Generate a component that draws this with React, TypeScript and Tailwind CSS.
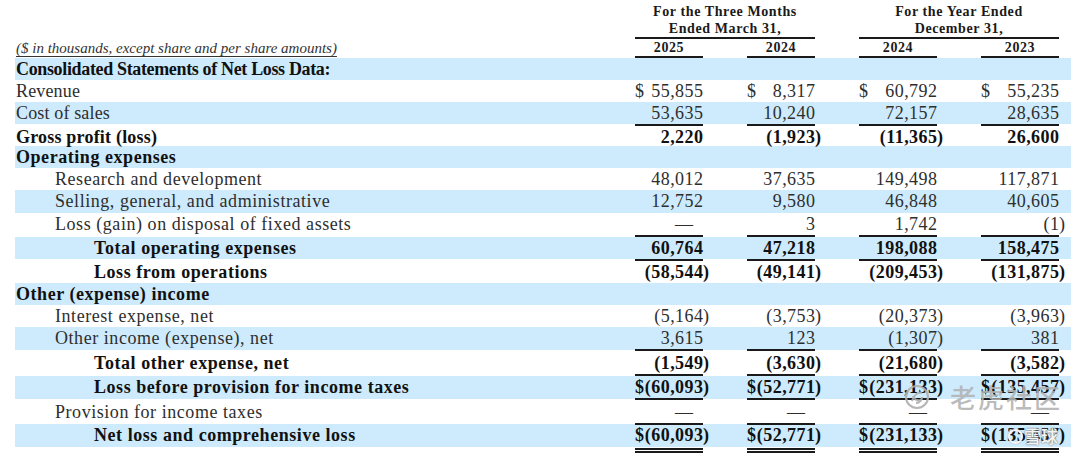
import clsx from "clsx";

type Row = {
  label: string;
  indent?: 0 | 1 | 2;
  bold?: boolean;
  band?: boolean;
  h: string;
  pt?: boolean;
  ul?: boolean;
  dollar?: boolean;
  track?: string;
  vals?: string[];
};

const rows: Row[] = [
  { label: "Consolidated Statements of Net Loss Data:", bold: true, band: true, h: "h-[22px]", track: "tracking-[-0.35px]" },
  { label: "Revenue", h: "h-[22px]", dollar: true, track: "tracking-[0.15px]", vals: ["55,855", "8,317", "60,792", "55,235"] },
  { label: "Cost of sales", band: true, h: "h-[22px]", ul: true, track: "tracking-[0.15px]", vals: ["53,635", "10,240", "72,157", "28,635"] },
  { label: "Gross profit (loss)", bold: true, h: "h-[22px]", pt: true, track: "tracking-[0.2px]", vals: ["2,220", "(1,923)", "(11,365)", "26,600"] },
  { label: "Operating expenses", bold: true, band: true, h: "h-[22px]" },
  { label: "Research and development", indent: 1, h: "h-[22px]", vals: ["48,012", "37,635", "149,498", "117,871"] },
  { label: "Selling, general, and administrative", indent: 1, band: true, h: "h-[23px]", vals: ["12,752", "9,580", "46,848", "40,605"] },
  { label: "Loss (gain) on disposal of fixed assets", indent: 1, h: "h-[24px]", ul: true, vals: ["—", "3", "1,742", "(1)"] },
  { label: "Total operating expenses", indent: 2, bold: true, band: true, h: "h-[22px]", ul: true, vals: ["60,764", "47,218", "198,088", "158,475"] },
  { label: "Loss from operations", indent: 2, bold: true, h: "h-[24px]", pt: true, vals: ["(58,544)", "(49,141)", "(209,453)", "(131,875)"] },
  { label: "Other (expense) income", bold: true, band: true, h: "h-[22px]" },
  { label: "Interest expense, net", indent: 1, h: "h-[22px]", vals: ["(5,164)", "(3,753)", "(20,373)", "(3,963)"] },
  { label: "Other income (expense), net", indent: 1, band: true, h: "h-[23px]", ul: true, vals: ["3,615", "123", "(1,307)", "381"] },
  { label: "Total other expense, net", indent: 2, bold: true, h: "h-[26px]", pt: true, ul: true, vals: ["(1,549)", "(3,630)", "(21,680)", "(3,582)"] },
  { label: "Loss before provision for income taxes", indent: 2, bold: true, band: true, h: "h-[23px]", ul: true, dollar: true, vals: ["(60,093)", "(52,771)", "(231,133)", "(135,457)"] },
  { label: "Provision for income taxes", indent: 1, h: "h-[25px]", pt: true, ul: true, vals: ["—", "—", "—", "—"] },
  { label: "Net loss and comprehensive loss", indent: 2, bold: true, band: true, h: "h-[23px]", dollar: true, vals: ["(60,093)", "(52,771)", "(231,133)", "(135,457)"] },
];

const indents = ["pl-[1px]", "pl-[40px]", "pl-[79px]"];

function Cell({ v, dollar, ul }: { v: string; dollar?: boolean; ul?: boolean }) {
  const neg = v.startsWith("(");
  const body = neg ? v.slice(0, -1) : v;
  return (
    <div className="flex">
      <div className={clsx("flex-1 flex justify-between", ul && "border-b-2 border-[#1a1a1a]")}>
        <span>{dollar ? "$" : ""}</span>
        <span className={clsx("tracking-[0.45px] -mr-[0.45px]", v === "—" && "pr-[10px]")}>{body}</span>
      </div>
      <span className="w-[8px]">{neg ? ")" : ""}</span>
    </div>
  );
}

function Values({ children, className }: { children: React.ReactNode; className?: string }) {
  return <div className={clsx("grid grid-cols-[76px_76px_86px_86px] gap-x-9", className)}>{children}</div>;
}

export default function App() {
  return (
    <div className="relative w-[1080px] h-[458px] overflow-hidden bg-white font-['Liberation_Serif','Times_New_Roman',serif] text-[#222]">
      {/* Column headers */}
      <div className="ml-[15px] w-[1056px] h-[58px] flex">
        <div className="w-[620px] flex flex-col justify-end pb-[1px]">
          <span className="pl-[1px] text-[15px] leading-[17px] italic text-[#333] underline underline-offset-[3px] decoration-[#333]">
            ($ in thousands, except share and per share amounts)
          </span>
        </div>
        <div className="flex flex-col pt-[3px] text-[14px] font-bold tracking-[0.6px] leading-[17px] text-[#1a1a1a]">
          <Values>
            <div className="col-span-2 mr-[8px] border-b-2 border-[#1a1a1a] text-center">
              For the Three Months
              <br />
              Ended March 31,
            </div>
            <div className="col-span-2 mr-[8px] border-b-2 border-[#1a1a1a] text-center">
              For the Year Ended
              <br />
              December 31,
            </div>
          </Values>
          <Values>
            {["2025", "2024", "2024", "2023"].map((y, i) => (
              <div key={i} className="mr-[8px] border-b-2 border-[#1a1a1a] text-center">
                {y}
              </div>
            ))}
          </Values>
        </div>
      </div>

      {/* Statement rows */}
      <div className="ml-[15px] w-[1056px] text-[18px] leading-[22px]">
        {rows.map((r, i) => (
          <div
            key={i}
            className={clsx(
              "flex box-border",
              r.h,
              r.pt && "pt-[2px]",
              r.band && "bg-[#cdebfc]",
              r.bold ? "font-bold text-[#111]" : "text-[#2e2e2e]"
            )}
          >
            <div className={clsx("w-[620px] whitespace-nowrap", indents[r.indent ?? 0], r.track ?? "tracking-[0.55px]")}>
              {r.label}
            </div>
            {r.vals && (
              <Values>
                {r.vals.map((v, j) => (
                  <Cell key={j} v={v} dollar={r.dollar} ul={r.ul} />
                ))}
              </Values>
            )}
          </div>
        ))}
        {/* double rule under net loss */}
        <div className="flex mt-[1px]">
          <div className="w-[620px]" />
          <Values>
            {[0, 1, 2, 3].map((k) => (
              <div key={k} className="mr-[8px] h-[5px] border-t-2 border-b-2 border-[#1a1a1a]" />
            ))}
          </Values>
        </div>
      </div>

      {/* Watermark */}
      <div className="absolute left-[904px] top-[384px] flex items-center gap-[20px] pointer-events-none">
        <svg width="26" height="26" viewBox="0 0 26 26" fill="none" stroke="rgba(175,175,175,0.9)" strokeWidth="2.2">
          <circle cx="13" cy="13" r="11" />
          <path d="M8 17c2-6 6-9 10-8M9 12c1 3 4 5 8 4M12 19c3 0 6-3 6-6" />
        </svg>
        <span className="text-[26px] leading-[26px] tracking-[2px] font-medium text-[rgba(178,178,178,0.88)] font-['Noto_Sans_CJK_SC',sans-serif]">
          老虎社区
        </span>
      </div>
      <div className="absolute left-[1008px] top-[427px] flex items-center gap-[1px] text-[17px] leading-[18px] font-medium text-[#f4f4f4] [text-shadow:0_0_1px_#777,0_0_2px_#888] font-['Noto_Sans_CJK_SC',sans-serif] pointer-events-none">
        <span className="inline-flex w-[15px] h-[15px] rounded-full border-2 border-[#f4f4f4] shadow-[0_0_1px_#777]" />
        <span>雪球</span>
      </div>
    </div>
  );
}
